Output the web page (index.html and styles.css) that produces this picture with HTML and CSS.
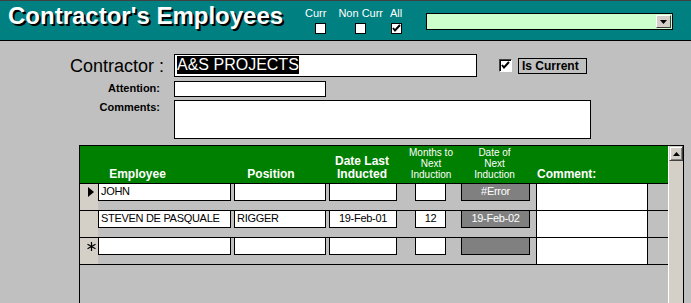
FILE: index.html
```html
<!DOCTYPE html>
<html lang="en">
<head>
    <meta charset="UTF-8">
    <meta name="viewport" content="width=device-width, initial-scale=1.0">
    <title>Contractor's Employees</title>
    <link rel="stylesheet" href="styles.css">
</head>
<body>
    <div class="header">
        <h1 class="title">Contractor's Employees</h1>

        <div class="filter filter-curr">
            <span class="filter-label">Curr</span>
            <span class="box"></span>
        </div>
        <div class="filter filter-non">
            <span class="filter-label">Non Curr</span>
            <span class="box"></span>
        </div>
        <div class="filter filter-all">
            <span class="filter-label">All</span>
            <span class="box">
                <svg width="9" height="9" viewBox="0 0 9 9"><path d="M1 4 L3 6.5 L8 1" fill="none" stroke="#000" stroke-width="2"/></svg>
            </span>
        </div>

        <div class="combo">
            <span class="combo-btn">
                <svg width="7" height="4" viewBox="0 0 7 4"><path d="M0 0 H7 L3.5 4 Z" fill="#000"/></svg>
            </span>
        </div>
    </div>

    <div class="form">
        <div class="row row-contractor">
            <label class="lbl lbl-big">Contractor :</label>
            <div class="field field-contractor"><span class="selected">A&amp;S PROJECTS</span></div>
            <span class="check3d">
                <svg width="9" height="9" viewBox="0 0 9 9"><path d="M1 4 L3 6.5 L8 1" fill="none" stroke="#000" stroke-width="2"/></svg>
            </span>
            <span class="current-label">Is Current</span>
        </div>

        <div class="row row-attention">
            <label class="lbl">Attention:</label>
            <div class="field field-attention"></div>
        </div>

        <div class="row row-comments">
            <label class="lbl">Comments:</label>
            <div class="field field-comments"></div>
        </div>

        <!-- employees subform -->
        <div class="subform">
            <div class="sheet">
                <div class="sheet-head">
                    <div class="hcell h-emp">Employee</div>
                    <div class="hcell h-pos">Position</div>
                    <div class="hcell h-date">Date Last<br>Inducted</div>
                    <div class="hcell small h-months">Months to<br>Next<br>Induction</div>
                    <div class="hcell small h-next">Date of<br>Next<br>Induction</div>
                    <div class="hcell h-comment">Comment:</div>
                </div>

                <div class="rec">
                    <div class="sel">
                        <svg width="6" height="10" viewBox="0 0 6 10"><path d="M0 0 L6 5 L0 10 Z" fill="#000"/></svg>
                    </div>
                    <div class="cell c-emp">JOHN</div>
                    <div class="cell c-pos"></div>
                    <div class="cell c-date"></div>
                    <div class="cell c-months"></div>
                    <div class="cell c-next">#Error</div>
                    <div class="c-comment"></div>
                </div>

                <div class="rec">
                    <div class="sel"></div>
                    <div class="cell c-emp">STEVEN DE PASQUALE</div>
                    <div class="cell c-pos">RIGGER</div>
                    <div class="cell c-date">19-Feb-01</div>
                    <div class="cell c-months">12</div>
                    <div class="cell c-next">19-Feb-02</div>
                    <div class="c-comment"></div>
                </div>

                <div class="rec">
                    <div class="sel sel-new">
                        <svg width="9" height="9" viewBox="0 0 9 9"><path d="M4.5 0 V9 M0.5 2.2 L8.5 6.8 M0.5 6.8 L8.5 2.2" stroke="#000" stroke-width="1.2"/></svg>
                    </div>
                    <div class="cell c-emp"></div>
                    <div class="cell c-pos"></div>
                    <div class="cell c-date"></div>
                    <div class="cell c-months"></div>
                    <div class="cell c-next"></div>
                    <div class="c-comment"></div>
                </div>
            </div>

            <div class="scrollbar">
                <span class="scroll-up">
                    <svg width="7" height="4" viewBox="0 0 7 4"><path d="M0 4 H7 L3.5 0 Z" fill="#000"/></svg>
                </span>
                <span class="scroll-track"></span>
            </div>
        </div>
    </div>
</body>
</html>
```

FILE: styles.css
```css
body {
    margin: 0;
    width: 691px;
    height: 303px;
    overflow: hidden;
    background-color: #c0c0c0;
    font-family: "Liberation Sans", Arial, sans-serif;
    color: #000;
}
svg {
    display: block;
}

/* top band */
.header {
    display: flex;
    align-items: flex-start;
    height: 41px;
    box-sizing: border-box;
    background-color: #008080;
    border-top: 1px solid #404040;
    border-bottom: 1px solid #000;
}
.title {
    margin: 3px 0 0 8px;
    width: 297px;
    font-size: 24px;
    line-height: 24px;
    font-weight: bold;
    color: #fff;
    text-shadow: 2px 2px 0 #000;
    white-space: nowrap;
}
.filter {
    display: flex;
    flex-direction: column;
    align-items: center;
    margin-top: 6px;
    font-size: 11px;
    line-height: 13px;
    color: #fff;
}
.filter-curr {
    align-items: flex-end;
}
.filter-non {
    margin-left: 12px;
}
.filter-all {
    margin-left: 7px;
}
.box {
    display: flex;
    align-items: center;
    justify-content: center;
    width: 11px;
    height: 11px;
    box-sizing: border-box;
    margin-top: 3px;
    background-color: #fff;
    border: 1px solid #000;
}
.combo {
    display: flex;
    justify-content: flex-end;
    align-items: center;
    margin: 12px 0 0 24px;
    width: 247px;
    height: 17px;
    box-sizing: border-box;
    padding-right: 1px;
    background-color: #ccffcc;
    border: 1px solid #000;
}
.combo-btn {
    display: flex;
    align-items: center;
    justify-content: center;
    width: 15px;
    height: 13px;
    box-sizing: border-box;
    background-color: #d4d0c8;
    border: 1px solid;
    border-color: #fff #404040 #404040 #fff;
}

/* main fields */
.form {
    padding-top: 13px;
}
.row {
    display: flex;
    align-items: flex-start;
}
.row-contractor {
    align-items: center;
    height: 23px;
}
.row-attention {
    margin-top: 4px;
}
.row-comments {
    margin-top: 3px;
}
.lbl {
    width: 164px;
    box-sizing: border-box;
    padding-right: 4px;
    margin-right: 10px;
    text-align: right;
    font-size: 11px;
    line-height: 13px;
    font-weight: bold;
    margin-top: 1px;
}
.lbl-big {
    padding-right: 0;
    margin-top: 0;
    font-size: 18px;
    line-height: 18px;
    font-weight: normal;
}
.field {
    box-sizing: border-box;
    background-color: #fff;
    border: 1px solid #000;
}
.field-contractor {
    width: 303px;
    height: 23px;
    padding: 1px 0 0 2px;
    font-size: 16px;
    line-height: 18px;
}
.selected {
    display: inline-block;
    background-color: #000;
    color: #fff;
}
.field-attention {
    width: 152px;
    height: 16px;
}
.field-comments {
    width: 417px;
    height: 39px;
}
.check3d {
    display: flex;
    align-items: center;
    justify-content: center;
    margin-left: 22px;
    width: 13px;
    height: 13px;
    box-sizing: border-box;
    background-color: #fff;
    border: 1px solid;
    border-color: #404040 #fff #fff #404040;
    box-shadow: inset 1px 1px #000;
}
.current-label {
    margin-left: 6px;
    width: 69px;
    height: 16px;
    box-sizing: border-box;
    padding-left: 3px;
    border: 1px solid #000;
    font-size: 12px;
    line-height: 14px;
    font-weight: bold;
}

/* subform */
.subform {
    display: flex;
    margin: 6px 0 0 79px;
    width: 605px;
    height: 170px;
    box-sizing: border-box;
    border: 1px solid #000;
    border-bottom: none;
}
.sheet {
    width: 588px;
}
.sheet-head {
    display: flex;
    align-items: flex-end;
    height: 37px;
    background-color: #008000;
    border-bottom: 1px solid #000;
    color: #fff;
}
.hcell {
    padding-bottom: 2px;
    text-align: center;
    font-size: 12px;
    line-height: 13px;
    font-weight: bold;
    white-space: nowrap;
}
.hcell.small {
    padding-bottom: 3px;
    font-size: 10px;
    line-height: 11px;
    font-weight: normal;
}
.h-emp {
    margin-left: 18px;
    width: 79px;
}
.h-pos {
    margin-left: 57px;
    width: 74px;
}
.h-date {
    margin-left: 21px;
    width: 66px;
}
.h-months {
    margin-left: 11px;
    width: 50px;
}
.h-next {
    margin-left: 10px;
    width: 57px;
}
.h-comment {
    margin-left: 14px;
    text-align: left;
}
.rec {
    display: flex;
    align-items: flex-start;
    height: 26px;
    border-bottom: 1px solid #000;
}
.sel {
    width: 18px;
    height: 26px;
    box-sizing: border-box;
    padding: 3px 0 0 8px;
    background-color: #d4d0c8;
}
.sel-new {
    padding: 4px 0 0 7px;
}
.cell {
    height: 18px;
    margin-top: -1px;
    box-sizing: border-box;
    padding: 0 2px;
    background-color: #fff;
    border: 1px solid #000;
    font-size: 11px;
    line-height: 14px;
    letter-spacing: -0.3px;
    white-space: nowrap;
    overflow: hidden;
}
.c-emp {
    width: 133px;
}
.c-pos {
    margin-left: 3px;
    width: 92px;
}
.c-date {
    margin-left: 3px;
    width: 68px;
    text-align: center;
}
.c-months {
    margin-left: 18px;
    width: 31px;
    text-align: center;
}
.c-next {
    margin-left: 15px;
    width: 69px;
    text-align: center;
    background-color: #808080;
    color: #fff;
}
.c-comment {
    margin-left: 6px;
    width: 112px;
    height: 26px;
    box-sizing: border-box;
    background-color: #fff;
    border-left: 1px solid #000;
    border-right: 1px solid #000;
}
.scrollbar {
    display: flex;
    flex-direction: column;
    width: 15px;
    box-sizing: border-box;
    border-left: 1px solid #fff;
    background-color: #d4d0c8;
}
.scroll-up {
    display: flex;
    align-items: center;
    justify-content: center;
    height: 15px;
    box-sizing: border-box;
    border: 1px solid;
    border-color: #d4d0c8 #404040 #404040 #d4d0c8;
    box-shadow: inset 1px 1px #fff, inset -1px -1px #808080;
}
.scroll-track {
    flex: 1;
}
```
